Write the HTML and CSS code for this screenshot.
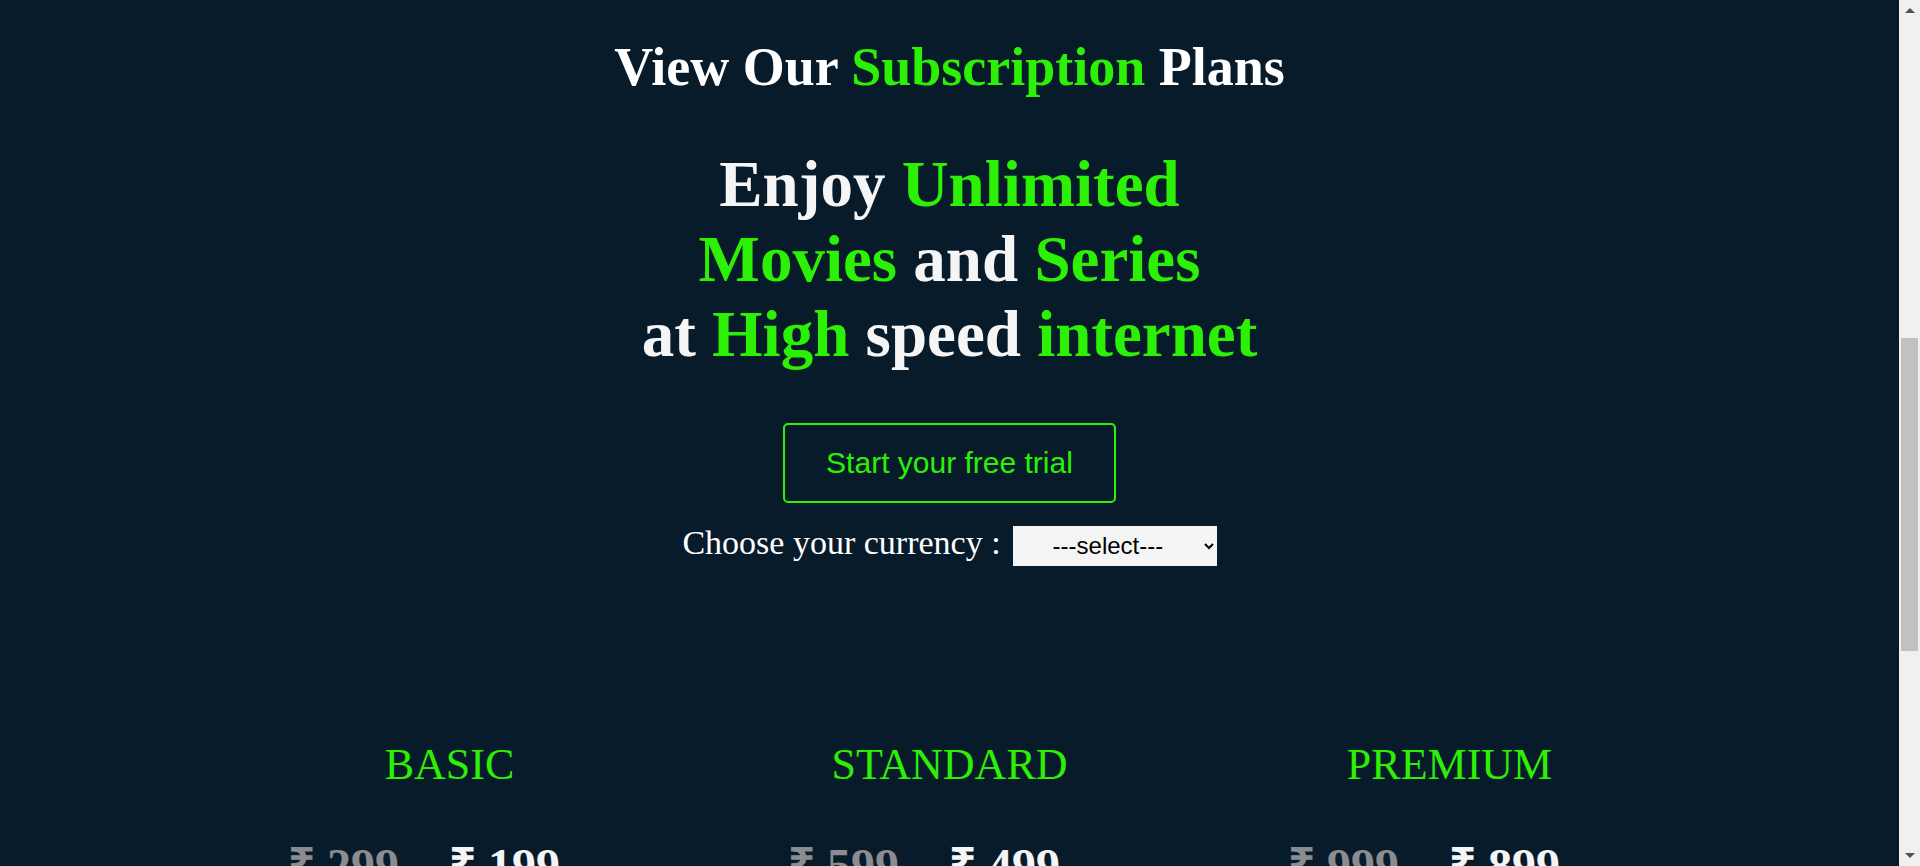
FILE: index.html
```html
<!DOCTYPE html>
<html lang="en">
<head>
<meta charset="utf-8">
<title>Subscription Plans</title>
<link rel="stylesheet" href="styles.css">
</head>
<body>
<main class="page">
  <section class="intro">
    <h1 class="title">View Our <span class="accent">Subscription</span> Plans</h1>
    <h2 class="headline">Enjoy <span class="accent">Unlimited</span><br><span class="accent">Movies</span> and <span class="accent">Series</span><br>at <span class="accent">High</span> speed <span class="accent">internet</span></h2>
    <button class="trial-btn" type="button">Start your free trial</button>
    <div class="currency">
      <label class="currency-label" for="currency">Choose your currency :</label>
      <select class="currency-select" id="currency">
        <option>---select---</option>
        <option>INR</option>
        <option>USD</option>
        <option>EUR</option>
      </select>
    </div>
  </section>

  <section class="plans">
    <article class="plan">
      <h3 class="plan-name">BASIC</h3>
      <div class="prices"><span class="old-price">₹ 299</span><span class="new-price">₹ 199</span></div>
      <ul class="features">
        <li>1 screen at a time</li>
        <li>HD available</li>
        <li>Watch on your phone</li>
        <li>Cancel anytime</li>
      </ul>
    </article>
    <article class="plan">
      <h3 class="plan-name">STANDARD</h3>
      <div class="prices"><span class="old-price">₹ 599</span><span class="new-price">₹ 499</span></div>
      <ul class="features">
        <li>2 screens at a time</li>
        <li>Full HD available</li>
        <li>Watch on TV and laptop</li>
        <li>Cancel anytime</li>
      </ul>
    </article>
    <article class="plan">
      <h3 class="plan-name">PREMIUM</h3>
      <div class="prices"><span class="old-price">₹ 999</span><span class="new-price">₹ 899</span></div>
      <ul class="features">
        <li>4 screens at a time</li>
        <li>Ultra HD available</li>
        <li>Watch on any device</li>
        <li>Cancel anytime</li>
      </ul>
    </article>
  </section>
</main>
<aside class="scrollbar" aria-hidden="true">
  <div class="sb-arrow sb-up"></div>
  <div class="sb-track"><div class="sb-thumb"></div></div>
  <div class="sb-arrow sb-down"></div>
</aside>
</body>
</html>
```

FILE: styles.css
```css
body {
  margin: 0;
  display: flex;
  align-items: flex-start;
  background: #081b2b;
  color: #f5f5f5;
  font-family: "Liberation Serif", "Times New Roman", serif;
}

.page {
  flex: 1;
  min-width: 0;
  min-height: 1440px;
}

.accent {
  color: #2cf005;
}

.intro {
  display: flex;
  flex-direction: column;
  align-items: center;
  text-align: center;
  padding-top: 36px;
}

.title {
  margin: 0;
  font-size: 54px;
  line-height: 62px;
  font-weight: bold;
  color: #ffffff;
}

.headline {
  margin: 49px 0 0;
  font-size: 65px;
  line-height: 75px;
  font-weight: bold;
  color: #f5f5f5;
}

.trial-btn {
  margin-top: 51px;
  padding: 20px 41px;
  font-family: "Liberation Sans", Arial, sans-serif;
  font-size: 30px;
  line-height: 36px;
  color: #2cf005;
  background: transparent;
  border: 2px solid #2cf005;
  border-radius: 5px;
  cursor: pointer;
}

.currency {
  display: flex;
  align-items: baseline;
  gap: 12px;
  margin-top: 20px;
}

.currency-label {
  font-size: 34px;
  line-height: 39px;
  color: #ffffff;
}

.currency-select {
  width: 204px;
  height: 40px;
  padding: 0 0 0 36px;
  font-family: "Liberation Sans", Arial, sans-serif;
  font-size: 24px;
  color: #000000;
  background-color: #f4f4f4;
  border: none;
  border-radius: 0;
}

.plans {
  display: grid;
  grid-template-columns: repeat(3, 500px);
  justify-content: center;
  margin-top: 174px;
}

.plan {
  display: flex;
  flex-direction: column;
  align-items: center;
}

.plan-name {
  margin: 0;
  font-size: 44px;
  line-height: 50px;
  font-weight: normal;
  color: #2cf005;
}

.prices {
  display: flex;
  justify-content: center;
  gap: 50px;
  padding-right: 51px;
  margin-top: 48px;
  font-size: 48px;
  line-height: 55px;
  font-weight: bold;
}

.old-price {
  color: #8a8c90;
}

.new-price {
  color: #f5f5f5;
}

.features {
  list-style: none;
  margin: 40px 0 0;
  padding: 0;
  font-size: 26px;
  line-height: 48px;
  text-align: center;
  color: #f5f5f5;
}

/* window scrollbar rail, as seen in the screenshot */
.scrollbar {
  flex: 0 0 21px;
  height: 100vh;
  position: sticky;
  top: 0;
  display: flex;
  flex-direction: column;
  background: #f0f0f0;
}

.sb-arrow {
  height: 21px;
  display: flex;
  align-items: center;
  justify-content: center;
}

.sb-up::before,
.sb-down::before {
  content: "";
  border-left: 5px solid transparent;
  border-right: 5px solid transparent;
}

.sb-up::before {
  border-bottom: 5px solid #505050;
}

.sb-down::before {
  border-top: 5px solid #505050;
}

.sb-track {
  flex: 1;
  padding: 317px 2px 0;
}

.sb-thumb {
  height: 313px;
  background: #c1c1c1;
}
```
